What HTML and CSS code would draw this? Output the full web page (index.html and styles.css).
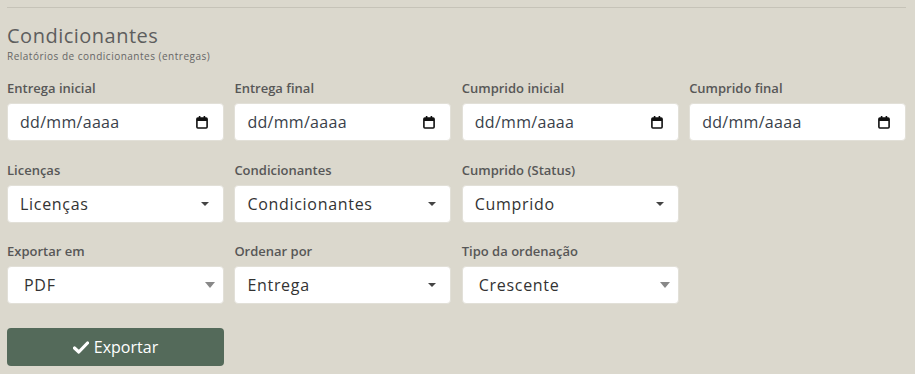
FILE: index.html
```html
<!DOCTYPE html>
<html lang="pt-BR">
<head>
    <meta charset="UTF-8">
    <meta name="viewport" content="width=device-width, initial-scale=1.0">
    <title>Condicionantes</title>
    <link rel="stylesheet" href="styles.css">
</head>
<body>
    <div class="page">
        <hr class="divider">
        <h2 class="title">Condicionantes</h2>
        <p class="subtitle">Relatórios de condicionantes (entregas)</p>

        <div class="grid">
            <div class="group">
                <label>Entrega inicial</label>
                <div class="field">
                    <span class="date">dd/mm/aaaa</span>
                    <svg class="cal" viewBox="0 0 12 13" width="12" height="13"><rect x="0.9" y="2" width="10.2" height="10" rx="1" fill="none" stroke="#111" stroke-width="1.6"/><rect x="1" y="2" width="10" height="3" fill="#111"/><rect x="2.8" y="0" width="1.6" height="3" fill="#111"/><rect x="7.6" y="0" width="1.6" height="3" fill="#111"/></svg>
                </div>
            </div>
            <div class="group">
                <label>Entrega final</label>
                <div class="field">
                    <span class="date">dd/mm/aaaa</span>
                    <svg class="cal" viewBox="0 0 12 13" width="12" height="13"><rect x="0.9" y="2" width="10.2" height="10" rx="1" fill="none" stroke="#111" stroke-width="1.6"/><rect x="1" y="2" width="10" height="3" fill="#111"/><rect x="2.8" y="0" width="1.6" height="3" fill="#111"/><rect x="7.6" y="0" width="1.6" height="3" fill="#111"/></svg>
                </div>
            </div>
            <div class="group">
                <label>Cumprido inicial</label>
                <div class="field">
                    <span class="date">dd/mm/aaaa</span>
                    <svg class="cal" viewBox="0 0 12 13" width="12" height="13"><rect x="0.9" y="2" width="10.2" height="10" rx="1" fill="none" stroke="#111" stroke-width="1.6"/><rect x="1" y="2" width="10" height="3" fill="#111"/><rect x="2.8" y="0" width="1.6" height="3" fill="#111"/><rect x="7.6" y="0" width="1.6" height="3" fill="#111"/></svg>
                </div>
            </div>
            <div class="group">
                <label>Cumprido final</label>
                <div class="field">
                    <span class="date">dd/mm/aaaa</span>
                    <svg class="cal" viewBox="0 0 12 13" width="12" height="13"><rect x="0.9" y="2" width="10.2" height="10" rx="1" fill="none" stroke="#111" stroke-width="1.6"/><rect x="1" y="2" width="10" height="3" fill="#111"/><rect x="2.8" y="0" width="1.6" height="3" fill="#111"/><rect x="7.6" y="0" width="1.6" height="3" fill="#111"/></svg>
                </div>
            </div>

            <div class="group">
                <label>Licenças</label>
                <div class="field">
                    <span class="value">Licenças</span>
                    <span class="caret"></span>
                </div>
            </div>
            <div class="group">
                <label>Condicionantes</label>
                <div class="field">
                    <span class="value">Condicionantes</span>
                    <span class="caret"></span>
                </div>
            </div>
            <div class="group">
                <label>Cumprido (Status)</label>
                <div class="field">
                    <span class="value">Cumprido</span>
                    <span class="caret"></span>
                </div>
            </div>
            <div class="group empty"></div>

            <div class="group">
                <label>Exportar em</label>
                <div class="field native">
                    <span class="value">PDF</span>
                    <span class="caret light"></span>
                </div>
            </div>
            <div class="group">
                <label>Ordenar por</label>
                <div class="field">
                    <span class="value">Entrega</span>
                    <span class="caret"></span>
                </div>
            </div>
            <div class="group">
                <label>Tipo da ordenação</label>
                <div class="field native">
                    <span class="value">Crescente</span>
                    <span class="caret light"></span>
                </div>
            </div>
        </div>

        <button class="btn-export" type="button">
            <svg viewBox="0 0 16 13" width="16" height="13"><path d="M1.5 7 L5.8 11 L14.5 2" fill="none" stroke="#fff" stroke-width="3.2" stroke-linecap="round" stroke-linejoin="round"/></svg>
            Exportar
        </button>
    </div>
</body>
</html>
```

FILE: styles.css
```css
body {
    margin: 0;
    background-color: #dbd8cd;
    font-family: "Open Sans", "Noto Sans", Arial, sans-serif;
    color: #333;
}
.page {
    padding: 7px;
    width: 899px;
}
.divider {
    margin: 0;
    border: none;
    border-top: 1px solid #c6c3b8;
}
.title {
    margin: 15px 0 0;
    font-size: 20px;
    font-weight: 400;
    line-height: 26px;
    letter-spacing: 0.5px;
    color: #5e5e5e;
}
.subtitle {
    margin: 0;
    font-size: 10px;
    line-height: 14px;
    letter-spacing: 0.5px;
    color: #666;
}
.grid {
    display: grid;
    grid-template-columns: repeat(4, 1fr);
    column-gap: 10.5px;
    row-gap: 19.5px;
    margin-top: 16px;
}
.group label {
    display: block;
    font-size: 13px;
    font-weight: 600;
    line-height: 19px;
    color: #575757;
    margin-bottom: 5px;
}
.field {
    box-sizing: border-box;
    height: 38px;
    background-color: #fff;
    border: 1px solid #e2e0d8;
    border-radius: 4px;
    display: flex;
    align-items: center;
    justify-content: space-between;
    padding: 0 13px 0 12px;
    font-size: 16px;
    color: #333;
}
.field.native {
    padding-left: 16px;
    padding-right: 7px;
}
.value {
    letter-spacing: 0.7px;
}
.date {
    letter-spacing: 0.3px;
    color: #3a3f4a;
}
.cal {
    margin-right: 2px;
}
.caret {
    width: 0;
    height: 0;
    border-left: 4px solid transparent;
    border-right: 4px solid transparent;
    border-top: 4px solid #444;
    margin-right: 1px;
}
.caret.light {
    border-left-width: 5px;
    border-right-width: 5px;
    border-top: 6px solid #888;
}
.btn-export {
    margin-top: 24px;
    width: 217px;
    height: 38px;
    background-color: #546a5a;
    color: #fff;
    border: none;
    border-radius: 4px;
    font-family: inherit;
    font-size: 16px;
    display: flex;
    align-items: center;
    justify-content: center;
    gap: 5px;
    cursor: pointer;
}
```
